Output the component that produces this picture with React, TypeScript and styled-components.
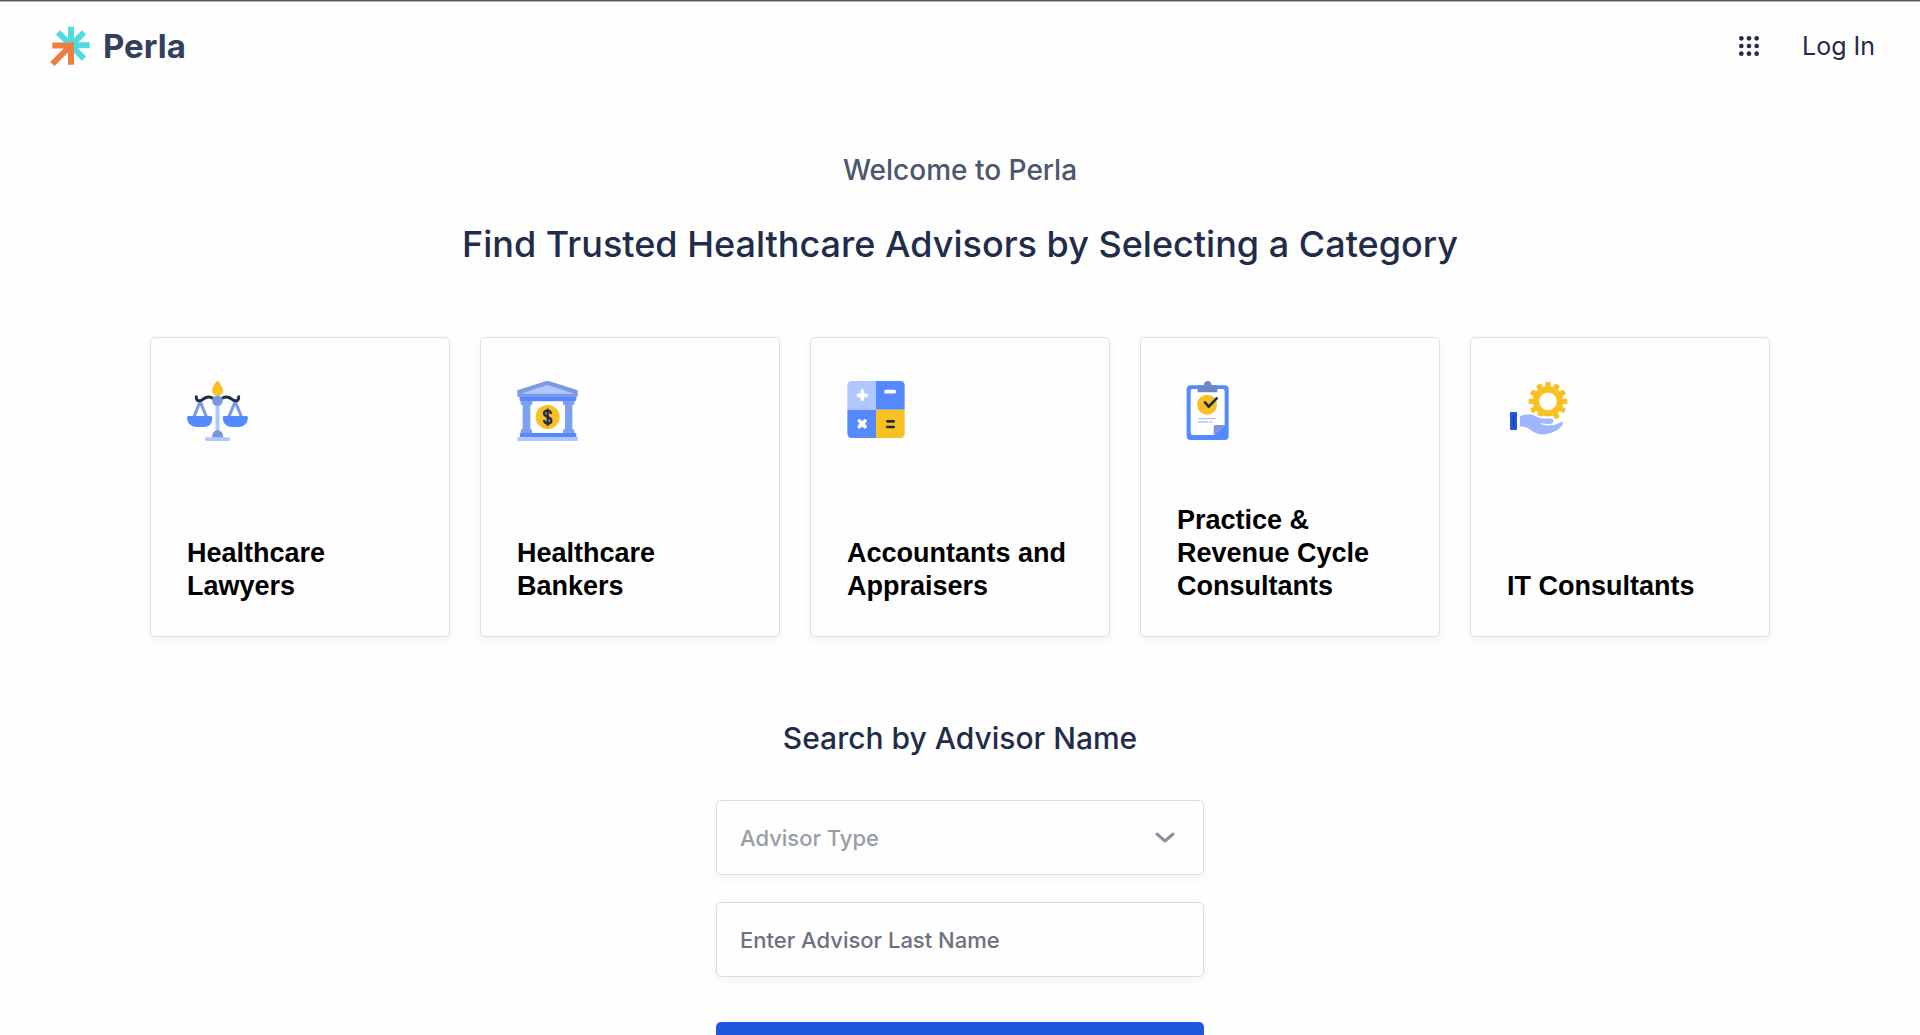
import React from "react";
import styled, { createGlobalStyle } from "styled-components";

const GlobalStyle = createGlobalStyle`
  *, *::before, *::after { box-sizing: border-box; }
  body {
    margin: 0;
    background: #fefefe;
    color: #1f2c4a;
    font-family: Inter, "Liberation Sans", sans-serif;
  }
`;

const Page = styled.div`
  height: 100vh;
  overflow: hidden;
  border-top: 1px solid #555456;
  box-shadow: inset 0 1px 0 #b5b5b6;
`;

const Header = styled.header`
  display: flex;
  align-items: center;
  justify-content: space-between;
  height: 90px;
  padding: 0 45px 0 50px;
`;

const Brand = styled.a`
  display: flex;
  align-items: center;
  gap: 11px;
  color: #33405c;
  font-size: 33px;
  font-weight: 700;
  line-height: 40px;
  text-decoration: none;
`;

const HeaderNav = styled.nav`
  display: flex;
  align-items: center;
  gap: 42px;
`;

const AppsButton = styled.button`
  display: flex;
  padding: 0;
  border: 0;
  background: none;
  color: #1f2c4a;
  cursor: pointer;
`;

const LoginLink = styled.a`
  color: #1f2c4a;
  font-size: 25px;
  line-height: 32px;
  text-decoration: none;
`;

const Main = styled.main`
  display: flex;
  flex-direction: column;
  align-items: center;
  padding: 59px 150px 0;
`;

const Welcome = styled.p`
  margin: 0;
  color: #4b566f;
  font-size: 28px;
  font-weight: 500;
  line-height: 40px;
`;

const Title = styled.h1`
  margin: 30px 0 0;
  font-size: 36px;
  font-weight: 500;
  line-height: 48px;
  text-align: center;
`;

const Cards = styled.div`
  display: grid;
  grid-template-columns: repeat(5, 1fr);
  gap: 30px;
  width: 100%;
  max-width: 1620px;
  margin-top: 69px;
`;

const Card = styled.a`
  display: flex;
  flex-direction: column;
  justify-content: space-between;
  aspect-ratio: 1;
  padding: 43px 36px 33px;
  border: 1px solid #dcdfe9;
  border-radius: 5px;
  background: #fefefe;
  box-shadow: 0 3px 8px rgba(31, 44, 74, 0.06);
  color: #000;
  font-family: "Liberation Sans", Arial, sans-serif;
  font-size: 27px;
  font-weight: 700;
  line-height: 33px;
  text-decoration: none;
`;

const Heading = styled.h2`
  margin: 81px 0 0;
  font-size: 30px;
  font-weight: 500;
  line-height: 40px;
`;

const Form = styled.form`
  display: flex;
  flex-direction: column;
  gap: 27px;
  width: 100%;
  max-width: 488px;
  margin-top: 42px;
`;

const SelectWrap = styled.div`
  display: grid;
  align-items: center;

  & > * { grid-area: 1 / 1; }

  & > svg {
    justify-self: end;
    margin-right: 28px;
    pointer-events: none;
  }
`;

const fieldStyles = `
  width: 100%;
  height: 75px;
  padding: 0 23px;
  border: 1px solid #d9dde5;
  border-radius: 5px;
  background: #fefefe;
  box-shadow: 0 3px 8px rgba(31, 44, 74, 0.06);
  font-family: inherit;
  font-size: 22px;
  font-weight: 500;
`;

const Select = styled.select`
  ${fieldStyles}
  appearance: none;
  color: #989da8;
`;

const Input = styled.input`
  ${fieldStyles}
  color: #1f2c4a;

  &::placeholder {
    color: #6b7180;
    opacity: 1;
  }
`;

const Submit = styled.button`
  height: 75px;
  margin-top: 18px;
  border: 0;
  border-radius: 5px;
  background: #1f57df;
  cursor: pointer;
`;

const Logo = () => (
  <svg width="42" height="42" viewBox="150 73 126 126" fill="none" strokeWidth="18" aria-hidden="true">
    <path stroke="#4fdbe0" d="M213 78V134M213 134H269M174 95L213 134L252 95M213 134L252 174" />
    <path stroke="#ee7d42" d="M157 134.500H222M213 126V192M157 190L216 131" />
  </svg>
);

const AppsIcon = () => (
  <svg width="22" height="22" viewBox="0 0 66 66" fill="currentColor" aria-hidden="true">
    {[10, 33, 56].map((y) => [10, 33, 56].map((x) => <circle key={`${x}-${y}`} cx={x} cy={y} r="7" />))}
  </svg>
);

const IconSvg = styled.svg.attrs({ width: 62, height: 62, fill: "none", "aria-hidden": true })`
  display: block;
`;

const ScalesIcon = () => (
  <IconSvg viewBox="141 153 186 186">
    <path stroke="#b0c8ff" strokeWidth="12" d="M232.500 220V308" />
    <g stroke="#7b9be0" strokeWidth="9" strokeLinejoin="round">
      <path d="M161 262L180.500 215L200 262M266 262L285.500 215L305 262" />
    </g>
    <g stroke="#1f2c4a" strokeWidth="9" strokeLinecap="round">
      <path d="M169 200C168 218 184 213 190 207C200 199 210 200 217 204M296 200C297 218 281 213 275 207C265 199 255 200 248 204" />
    </g>
    <path fill="#5589ff" d="M145 258H213Q217 258 217 263Q216 291 190 291H169Q143 289 141 264Q141 258 145 258ZM252 258H320Q324 258 324 263Q322 289 296 291H275Q250 289 248 264Q248 258 252 258Z" />
    <circle cx="232.500" cy="212" r="16" fill="#7b97dc" />
    <path fill="#7b97dc" d="M216 323C217 308 223 301 232.500 301S249 308 250 323Z" />
    <rect x="195" y="322" width="75" height="11" rx="5" fill="#b0c8ff" />
    <path fill="#f8c022" d="M232.500 152C237 154 249 173 249 182Q249 191 240 196H225Q216 191 216 182C216 173 228 154 232.500 152Z" />
  </IconSvg>
);

const BankIcon = () => (
  <IconSvg viewBox="51 63 186 186">
    <path fill="#7b9be0" d="M52 91L136 64Q142 62 149 64L233 91V107Q233 111 228 111H57Q52 111 52 107Z" />
    <path fill="#b0c8ff" d="M62 101L142 75L223 101Z" />
    <path fill="#5589ff" d="M59 111H229V120Q228 124 223 124H65Q60 124 59 120Z" />
    <path fill="#7da0f0" d="M62 123H97V131Q97 135 91 136V206Q96 207 96 213V220H62V213Q62 207 68 206V136Q62 135 62 131ZM189 123H223V131Q223 135 217 136V206Q223 207 223 213V220H189V213Q189 207 195 206V136Q189 135 189 131Z" />
    <rect x="60" y="219" width="169" height="13" rx="3" fill="#5589ff" />
    <rect x="52" y="231" width="182" height="12" rx="3" fill="#b0c8ff" />
    <circle cx="143" cy="171" r="36" fill="#f8c022" />
    <path stroke="#1f2c4a" strokeWidth="7" d="M143 146V197M153 162C152 149 133 149 132 160C132 174 154 167 154 182C153 194 133 194 132 180" />
  </IconSvg>
);

const CalculatorIcon = () => (
  <IconSvg viewBox="51 63 186 186">
    <path fill="#b0c8ff" d="M66 63H138V149H52V77Q52 63 66 63Z" />
    <path fill="#5589ff" d="M138 63H210Q224 63 224 77V149H138ZM52 149H138V234H66Q52 234 52 220Z" />
    <path fill="#f8c022" d="M138 149H224V220Q224 234 210 234H138Z" />
    <path stroke="#fff" strokeWidth="11" strokeLinecap="round" d="M97 93V118M85 106H109M168 95H193M88 183L105 200M105 183L88 200" />
    <path stroke="#1f2c4a" strokeWidth="8" strokeLinecap="round" d="M172 184H191M172 201H191" />
  </IconSvg>
);

const ClipboardIcon = () => (
  <IconSvg viewBox="51 63 186 186">
    <rect x="80" y="76" width="126" height="164" rx="12" fill="#5589ff" />
    <path fill="#fff" d="M98 87H189Q194 87 194 92V195L161 225H98Q92 225 92 219V93Q92 87 98 87Z" />
    <path fill="#7b97dc" d="M161 225V200Q161 195 167 195H194Z" />
    <path fill="#6c87c9" d="M113 78Q113 76 117 76H131C132 59 154 59 155 76H168Q172 76 172 80V97H113Z" />
    <circle cx="141" cy="134" r="30" fill="#f8c022" />
    <path stroke="#1f2c4a" strokeWidth="8" strokeLinecap="round" strokeLinejoin="round" d="M135 127L146 140L170 115" />
    <path stroke="#a9c2ff" strokeWidth="4" strokeLinecap="round" d="M116 176H166M116 186H142M149 186H155" />
  </IconSvg>
);

const gearTeeth = Array.from({ length: 12 }, (_, i) => i * 30).filter((a) => a !== 180);

const ServiceIcon = () => (
  <IconSvg viewBox="51 63 186 186">
    <circle cx="174" cy="124" r="36" stroke="#f8c022" strokeWidth="19" />
    {gearTeeth.map((angle) => (
      <rect key={angle} x="166" y="66" width="16" height="18" rx="3" fill="#f8c022" transform={`rotate(${angle} 174 124)`} />
    ))}
    <path
      fill="#9db6ff"
      stroke="#fefefe"
      strokeWidth="5"
      d="M87 167Q104 159 122 161C137 162 144 173 158 173H185Q194 176 193 184Q192 191 184 194C200 195 205 185 216 183Q223 185 220 195C213 208 193 221 166 225Q149 228 133 220L112 206Q101 201 87 202Z"
    />
    <path stroke="#fefefe" strokeWidth="4" strokeLinecap="round" d="M154 191Q174 197 186 192" />
    <rect x="60" y="156" width="21" height="54" rx="2" fill="#2159dc" />
    <path stroke="#173f9f" strokeWidth="4" strokeLinecap="round" d="M71 166V200" />
  </IconSvg>
);

const ChevronIcon = () => (
  <svg width="22" height="22" viewBox="0 0 22 22" fill="none" stroke="#8a909c" strokeWidth="3" strokeLinecap="round" strokeLinejoin="round" aria-hidden="true">
    <path d="M3 7L11 14L19 7" />
  </svg>
);

const categories = [
  { label: "Healthcare Lawyers", Icon: ScalesIcon },
  { label: "Healthcare Bankers", Icon: BankIcon },
  { label: "Accountants and Appraisers", Icon: CalculatorIcon },
  { label: "Practice & Revenue Cycle Consultants", Icon: ClipboardIcon },
  { label: "IT Consultants", Icon: ServiceIcon },
];

export default function App() {
  return (
    <>
      <GlobalStyle />
      <Page>
        <Header>
          <Brand href="#">
            <Logo />
            Perla
          </Brand>
          <HeaderNav>
            <AppsButton type="button" aria-label="Apps">
              <AppsIcon />
            </AppsButton>
            <LoginLink href="#login">Log In</LoginLink>
          </HeaderNav>
        </Header>
        <Main>
          <Welcome>Welcome to Perla</Welcome>
          <Title>Find Trusted Healthcare Advisors by Selecting a Category</Title>
          <Cards>
            {categories.map(({ label, Icon }) => (
              <Card key={label} href="#category">
                <Icon />
                <span>{label}</span>
              </Card>
            ))}
          </Cards>
          <Heading>Search by Advisor Name</Heading>
          <Form onSubmit={(event) => event.preventDefault()}>
            <SelectWrap>
              <Select aria-label="Advisor Type" defaultValue="">
                <option value="">Advisor Type</option>
              </Select>
              <ChevronIcon />
            </SelectWrap>
            <Input type="text" aria-label="Enter Advisor Last Name" placeholder="Enter Advisor Last Name" />
            <Submit type="submit" aria-label="Search" />
          </Form>
        </Main>
      </Page>
    </>
  );
}
